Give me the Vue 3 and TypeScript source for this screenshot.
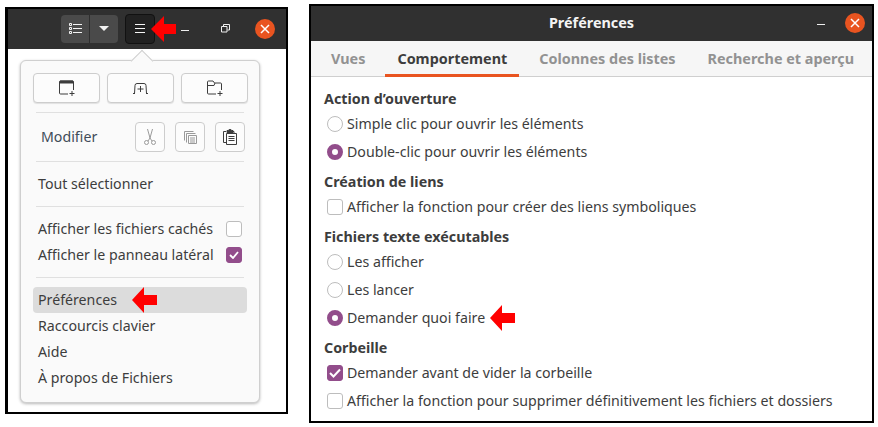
<script setup lang="ts">
const menuRows = ["Raccourcis clavier", "Aide", "À propos de Fichiers"];
const tabs = ["Vues", "Comportement", "Colonnes des listes", "Recherche et aperçu"];

type Option = { label: string; kind: "radio" | "check"; on?: boolean; arrow?: boolean };
const groups: { title: string; options: Option[] }[] = [
  {
    title: "Action d’ouverture",
    options: [
      { label: "Simple clic pour ouvrir les éléments", kind: "radio" },
      { label: "Double-clic pour ouvrir les éléments", kind: "radio", on: true },
    ],
  },
  {
    title: "Création de liens",
    options: [{ label: "Afficher la fonction pour créer des liens symboliques", kind: "check" }],
  },
  {
    title: "Fichiers texte exécutables",
    options: [
      { label: "Les afficher", kind: "radio" },
      { label: "Les lancer", kind: "radio" },
      { label: "Demander quoi faire", kind: "radio", on: true, arrow: true },
    ],
  },
  {
    title: "Corbeille",
    options: [
      { label: "Demander avant de vider la corbeille", kind: "check", on: true },
      { label: "Afficher la fonction pour supprimer définitivement les fichiers et dossiers", kind: "check" },
    ],
  },
];
</script>

<template>
  <div class="page">
    <section class="files">
      <header class="files-bar">
        <div class="view-group">
          <span class="view-btn">
            <svg width="13" height="12" viewBox="0 0 13 12" fill="none" stroke="#f2f2f2">
              <path d="M.5.5h2v2h-2zM.5 4.500h2v2h-2zM.5 8.500h2v2h-2zM4 1.500h9M4 5.500h9M4 9.500h9" />
            </svg>
          </span>
          <span class="view-btn narrow">
            <svg width="10" height="5" viewBox="0 0 10 5"><path d="M0 0h10L5 5z" fill="#f2f2f2" /></svg>
          </span>
        </div>
        <span class="burger">
          <svg width="10" height="10" viewBox="0 0 10 10" stroke="#f5f5f5"><path d="M0 .5h10M0 4.500h10M0 8.500h10" /></svg>
          <svg class="red-arrow" width="25" height="26" viewBox="0 0 25 26"><path d="M0 13 13 0v8h12v10H13v8z" fill="#f00" /></svg>
        </span>
        <span class="win-min"></span>
        <svg class="win-max" width="9" height="9" viewBox="0 0 9 9" fill="none" stroke="#eee"><path d="M.5 2.500h5.500v5.500h-5.500zM2.500 2V.5H8.500v5.500H6.500" /></svg>
        <span class="win-close">
          <svg width="10" height="10" viewBox="0 0 10 10" stroke="#fff" stroke-width="1.500"><path d="M1 1l8 8M9 1l-8 8" /></svg>
        </span>
      </header>
      <div class="files-body">
        <div class="popover">
          <span class="popover-tip"></span>
          <div class="new-row">
            <button class="tool" type="button">
              <svg width="16" height="16" viewBox="0 0 16 16" fill="none" stroke="#3d3d3d">
                <path d="M.5 13V2a1 1 0 0 1 1-1h12a1 1 0 0 1 1 1v8M.5 13a1 1 0 0 0 1 1H9" />
                <path d="M1 1h13v2H1z" fill="#3d3d3d" />
                <path d="M13 11v5M10.500 13.500h5" />
              </svg>
            </button>
            <button class="tool" type="button">
              <svg width="15" height="11" viewBox="0 0 15 11" fill="none" stroke="#3d3d3d">
                <path d="M1.500 10.500 2 2.500a2 2 0 0 1 2-2h7a2 2 0 0 1 2 2l.5 8M0 10.500h2M13 10.500h2M7.500 3v6M4.500 6h6" />
              </svg>
            </button>
            <button class="tool" type="button">
              <svg width="16" height="16" viewBox="0 0 16 16" fill="none" stroke="#3d3d3d">
                <path d="M.5 13V2a1 1 0 0 1 1-1H6L7.500 3h6a1 1 0 0 1 1 1v6M.5 5.500H7l1-2.500M.5 13a1 1 0 0 0 1 1H9" />
                <path d="M13 11v5M10.500 13.500h5" />
              </svg>
            </button>
          </div>
          <hr class="sep" />
          <div class="edit-row">
            <span class="edit-label">Modifier</span>
            <span class="edit-tools">
              <span class="edit-btn">
                <svg width="12" height="16" viewBox="0 0 12 16" fill="none" stroke="#9a9a9a">
                  <path d="M3.500 0 6 9M8.500 0 6 9 4 12M6 9l2 3" />
                  <circle cx="2.500" cy="13.500" r="2" />
                  <circle cx="9.500" cy="13.500" r="2" />
                </svg>
              </span>
              <span class="edit-btn">
                <svg width="13" height="13" viewBox="0 0 13 13" fill="none" stroke="#9a9a9a">
                  <path d="M.5.5h9M.5.5v9M2.500 2.500h9M2.500 2.500v9" />
                  <path d="M4.500 4.500h8v8h-8zM6 7h5M6 9h5M6 11h5" />
                </svg>
              </span>
              <span class="edit-btn">
                <svg width="14" height="16" viewBox="0 0 14 16" fill="none" stroke="#3d3d3d">
                  <path d="M3 13.500H.5v-11H3M11 4V2.500H9" />
                  <path d="M3.500 4.500h10v11h-10zM5.500 7.500h6M5.500 9.500h6M5.500 11.500h6" />
                  <path d="M4 1.500h1.500a1.500 1 0 0 1 3 0H10V3.500H4z" fill="#3d3d3d" />
                </svg>
              </span>
            </span>
          </div>
          <hr class="sep" />
          <div class="menu-row">Tout sélectionner</div>
          <hr class="sep" />
          <div class="toggle-row">
            Afficher les fichiers cachés
            <span class="check"></span>
          </div>
          <div class="toggle-row">
            Afficher le panneau latéral
            <span class="check on">
              <svg width="10" height="8" viewBox="0 0 10 8" fill="none" stroke="#fff" stroke-width="1.800"><path d="M1 4l3 3 5-6" /></svg>
            </span>
          </div>
          <hr class="sep" />
          <div class="menu-row active">
            Préférences
            <svg class="inline-arrow" width="25" height="26" viewBox="0 0 25 26"><path d="M0 13 12 0v8h13v10H12v8z" fill="#f00" /></svg>
          </div>
          <div v-for="row in menuRows" :key="row" class="menu-row">{{ row }}</div>
        </div>
      </div>
    </section>

    <section class="prefs">
      <header class="prefs-bar">
        <span class="prefs-title">Préférences</span>
        <span class="prefs-min"></span>
        <span class="win-close prefs-close">
          <svg width="10" height="10" viewBox="0 0 10 10" stroke="#fff" stroke-width="1.500"><path d="M1 1l8 8M9 1l-8 8" /></svg>
        </span>
      </header>
      <nav class="tabs">
        <span v-for="tab in tabs" :key="tab" class="tab" :class="{ current: tab === 'Comportement' }">{{ tab }}</span>
      </nav>
      <div class="prefs-body">
        <div v-for="group in groups" :key="group.title" class="group">
          <h3>{{ group.title }}</h3>
          <div v-for="opt in group.options" :key="opt.label" class="option">
            <span v-if="opt.kind === 'radio'" class="radio" :class="{ on: opt.on }"></span>
            <span v-else class="check" :class="{ on: opt.on }">
              <svg v-if="opt.on" width="12" height="10" viewBox="0 0 12 10" fill="none" stroke="#fff" stroke-width="2"><path d="M1 5l3.500 3.500L11 1.500" /></svg>
            </span>
            <span class="option-label">{{ opt.label }}</span>
            <svg v-if="opt.arrow" class="option-arrow" width="25" height="26" viewBox="0 0 25 26"><path d="M0 13 12 0v8h13v10H12v8z" fill="#f00" /></svg>
          </div>
        </div>
      </div>
    </section>
  </div>
</template>

<style scoped>
.page {
  display: flex;
  align-items: flex-start;
  width: 878px;
  height: 427px;
  padding: 4px 0 0 5px;
  box-sizing: border-box;
  overflow: hidden;
  background: #fff;
  color: #3d3d3d;
  font-family: "Noto Sans", "Open Sans", sans-serif;
  font-size: 14.2px;
}

.files {
  width: 283px;
  height: 407px;
  margin-top: 3px;
  box-sizing: border-box;
  border: 2px solid #000;
  border-left-width: 3px;
  background: #fff;
}

.files-bar {
  display: flex;
  align-items: center;
  height: 40px;
  padding-left: 53px;
  background: #303030;
}

.view-group {
  display: flex;
  height: 28px;
  margin-top: -1px;
  overflow: hidden;
  border-radius: 4px;
  background: #4a4a4a;
}

.view-btn {
  display: flex;
  align-items: center;
  justify-content: center;
  width: 28px;
  border-right: 1px solid #2f2f2f;
}

.view-btn.narrow {
  width: 28px;
  border-right: 0;
}

.burger {
  position: relative;
  display: flex;
  align-items: center;
  justify-content: center;
  width: 30px;
  height: 30px;
  margin: -1px 0 0 7px;
  box-sizing: border-box;
  border: 1px solid #111;
  border-radius: 4px;
  background: #212121;
}

.red-arrow {
  position: absolute;
  top: 1px;
  left: 25px;
}

.win-min {
  width: 8px;
  height: 1px;
  margin: 3px 0 0 26px;
  background: #eee;
}

.win-max {
  margin: -1px 0 0 32px;
}

.win-close {
  display: flex;
  align-items: center;
  justify-content: center;
  width: 20px;
  height: 20px;
  margin: -1px 0 0 25px;
  border-radius: 50%;
  background: #e95420;
}

.files-body {
  padding: 11px 26px 0 12px;
}

.popover {
  position: relative;
  width: 240px;
  height: 343px;
  padding: 12px 12px 0;
  box-sizing: border-box;
  border: 1px solid #cfcfcf;
  border-radius: 6px;
  background: #fafafa;
  box-shadow: 0 1px 3px rgb(0 0 0 / 28%);
}

.popover-tip {
  position: absolute;
  top: -8px;
  left: 113px;
  width: 15px;
  height: 15px;
  border-top: 1px solid #cfcfcf;
  border-left: 1px solid #cfcfcf;
  background: #fafafa;
  transform: rotate(45deg);
}

.new-row {
  position: relative;
  display: grid;
  grid-template-columns: repeat(3, 67px);
  gap: 7px;
}

.tool {
  display: flex;
  align-items: center;
  justify-content: center;
  height: 30px;
  padding: 0;
  border: 1px solid #cdcdcd;
  border-radius: 4px;
  background: #fcfcfc;
  box-shadow: 0 1px 1px rgb(0 0 0 / 10%);
}

.sep {
  height: 1px;
  margin: 9px 3px;
  border: 0;
  background: #e0e0e0;
}

.edit-row {
  display: flex;
  align-items: center;
  justify-content: space-between;
  height: 30px;
}

.edit-label {
  padding: 0 0 2px 8px;
  color: #414c58;
}

.edit-tools {
  display: flex;
  gap: 10px;
  padding-right: 2px;
}

.edit-btn {
  display: flex;
  align-items: center;
  justify-content: center;
  width: 30px;
  height: 30px;
  box-sizing: border-box;
  border: 1px solid #cdcdcd;
  border-radius: 4px;
  background: #fcfcfc;
}

.menu-row,
.toggle-row {
  position: relative;
  display: flex;
  align-items: center;
  justify-content: space-between;
  height: 26px;
  padding: 0 5px 2px;
  box-sizing: border-box;
  border-radius: 4px;
}

.toggle-row .check {
  margin-top: 2px;
}

.menu-row.active {
  justify-content: flex-start;
  background: #dcdcdc;
}

.inline-arrow {
  position: absolute;
  top: 0;
  left: 99px;
}

.prefs {
  width: 565px;
  height: 419px;
  margin-left: 21px;
  box-sizing: border-box;
  border: 2px solid #000;
  background: #fff;
}

.prefs-bar {
  position: relative;
  display: flex;
  align-items: center;
  justify-content: center;
  height: 35px;
  padding-bottom: 2px;
  box-sizing: border-box;
  background: #303030;
}

.prefs-title {
  color: #f4f4f4;
  font-size: 14.4px;
  font-weight: 700;
}

.prefs-min {
  position: absolute;
  top: 18px;
  right: 47px;
  width: 8px;
  height: 1px;
  background: #eee;
}

.prefs-close {
  position: absolute;
  top: 7px;
  right: 7px;
  margin: 0;
}

.tabs {
  display: flex;
  gap: 8px;
  height: 35px;
  padding-left: 8px;
  border-bottom: 1px solid #cfcfcf;
  background: #f6f6f6;
}

.tab {
  display: flex;
  align-items: center;
  height: 36px;
  padding: 1px 12px 0;
  box-sizing: border-box;
  border-bottom: 3px solid transparent;
  color: #929292;
  font-size: 14.4px;
  font-weight: 700;
}

.tab.current {
  color: #3d3d3d;
  border-bottom-color: #e95420;
}

.prefs-body {
  padding: 11px 13px 0;
}

.group {
  margin-bottom: 5px;
}

h3 {
  height: 22px;
  margin: 0;
  font-size: 14.300px;
  font-weight: 700;
  line-height: 22px;
}

.option {
  display: flex;
  align-items: center;
  gap: 4px;
  height: 28px;
  padding-left: 3px;
}

.option-label {
  margin-bottom: 2px;
}

.radio {
  flex: none;
  width: 16px;
  height: 16px;
  box-sizing: border-box;
  border: 1px solid #bdbdbd;
  border-radius: 50%;
  background: #fff;
}

.radio.on {
  border: 5px solid #924d8b;
}

.check {
  display: flex;
  flex: none;
  align-items: center;
  justify-content: center;
  width: 16px;
  height: 16px;
  box-sizing: border-box;
  border: 1px solid #bdbdbd;
  border-radius: 3px;
  background: #fff;
}

.check.on {
  border-color: #924d8b;
  background: #924d8b;
}

.option-arrow {
  margin-left: 1px;
}
</style>
